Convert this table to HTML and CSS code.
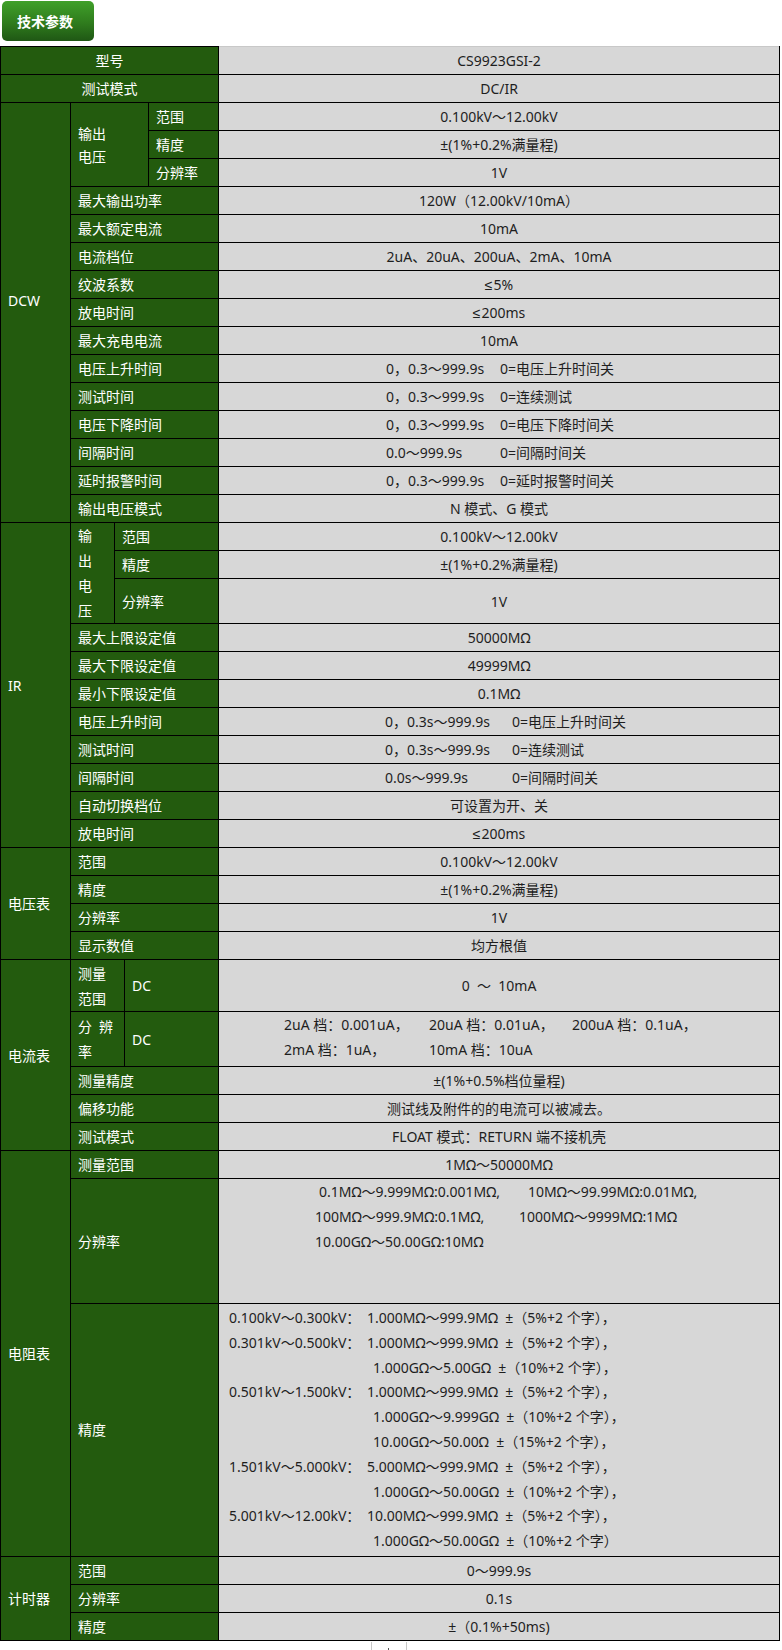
FILE: index.html
```html
<!DOCTYPE html>
<html lang="zh-CN">
<head>
<meta charset="utf-8">
<title>技术参数</title>
<link rel="stylesheet" href="styles.css">
</head>
<body>
<div class="head"><div class="btn">技术参数</div></div>
<table class="spec">
<colgroup>
<col class="w70"><col class="w44"><col class="w10"><col class="w24"><col class="w70"><col class="wv">
</colgroup>
<tbody>
<tr><td colspan="5" class="lab c">型号</td><td class="val top">CS9923GSI-2</td></tr>
<tr><td colspan="5" class="lab c">测试模式</td><td class="val">DC/IR</td></tr>

<tr><td rowspan="15" class="lab dcw">DCW</td><td rowspan="3" colspan="3" class="lab two">输出<br>电压</td><td class="lab">范围</td><td class="val">0.100kV～12.00kV</td></tr>
<tr><td class="lab">精度</td><td class="val">±(1%+0.2%满量程)</td></tr>
<tr><td class="lab">分辨率</td><td class="val">1V</td></tr>
<tr><td colspan="4" class="lab">最大输出功率</td><td class="val">120W（12.00kV/10mA）</td></tr>
<tr><td colspan="4" class="lab">最大额定电流</td><td class="val">10mA</td></tr>
<tr><td colspan="4" class="lab">电流档位</td><td class="val">2uA、20uA、200uA、2mA、10mA</td></tr>
<tr><td colspan="4" class="lab">纹波系数</td><td class="val"><span class="le">≤</span>5%</td></tr>
<tr><td colspan="4" class="lab">放电时间</td><td class="val"><span class="le">≤</span>200ms</td></tr>
<tr><td colspan="4" class="lab">最大充电电流</td><td class="val">10mA</td></tr>
<tr><td colspan="4" class="lab">电压上升时间</td><td class="val lv"><span class="p1">0，0.3～999.9s</span>0=电压上升时间关</td></tr>
<tr><td colspan="4" class="lab">测试时间</td><td class="val lv"><span class="p1">0，0.3～999.9s</span>0=连续测试</td></tr>
<tr><td colspan="4" class="lab">电压下降时间</td><td class="val lv"><span class="p1">0，0.3～999.9s</span>0=电压下降时间关</td></tr>
<tr><td colspan="4" class="lab">间隔时间</td><td class="val lv"><span class="p1">0.0～999.9s</span>0=间隔时间关</td></tr>
<tr><td colspan="4" class="lab">延时报警时间</td><td class="val lv"><span class="p1">0，0.3～999.9s</span>0=延时报警时间关</td></tr>
<tr><td colspan="4" class="lab">输出电压模式</td><td class="val">N 模式、G 模式</td></tr>

<tr><td rowspan="11" class="lab">IR</td><td rowspan="3" class="lab vert">输<br>出<br>电<br>压</td><td colspan="3" class="lab">范围</td><td class="val">0.100kV～12.00kV</td></tr>
<tr><td colspan="3" class="lab">精度</td><td class="val">±(1%+0.2%满量程)</td></tr>
<tr class="h45"><td colspan="3" class="lab">分辨率</td><td class="val">1V</td></tr>
<tr><td colspan="4" class="lab">最大上限设定值</td><td class="val">50000MΩ</td></tr>
<tr><td colspan="4" class="lab">最大下限设定值</td><td class="val">49999MΩ</td></tr>
<tr><td colspan="4" class="lab">最小下限设定值</td><td class="val">0.1MΩ</td></tr>
<tr><td colspan="4" class="lab">电压上升时间</td><td class="val lv ir"><span class="p1">0，0.3s～999.9s</span>0=电压上升时间关</td></tr>
<tr><td colspan="4" class="lab">测试时间</td><td class="val lv ir"><span class="p1">0，0.3s～999.9s</span>0=连续测试</td></tr>
<tr><td colspan="4" class="lab">间隔时间</td><td class="val lv ir"><span class="p1">0.0s～999.9s</span>0=间隔时间关</td></tr>
<tr><td colspan="4" class="lab">自动切换档位</td><td class="val">可设置为开、关</td></tr>
<tr><td colspan="4" class="lab">放电时间</td><td class="val"><span class="le">≤</span>200ms</td></tr>

<tr><td rowspan="4" class="lab">电压表</td><td colspan="4" class="lab">范围</td><td class="val">0.100kV～12.00kV</td></tr>
<tr><td colspan="4" class="lab">精度</td><td class="val">±(1%+0.2%满量程)</td></tr>
<tr><td colspan="4" class="lab">分辨率</td><td class="val">1V</td></tr>
<tr><td colspan="4" class="lab">显示数值</td><td class="val">均方根值</td></tr>

<tr class="h50"><td rowspan="5" class="lab">电流表</td><td colspan="2" class="lab tight">测量<br>范围</td><td colspan="2" class="lab">DC</td><td class="val pre">0  ～  10mA</td></tr>
<tr class="h53"><td colspan="2" class="lab tight">分&ensp;辨<br>率</td><td colspan="2" class="lab">DC</td><td class="val cur"><div><span class="q1">2uA 档：0.001uA，</span><span class="q2">20uA 档：0.01uA，</span>200uA 档：0.1uA，</div><div><span class="q1">2mA 档：1uA，</span>10mA 档：10uA</div></td></tr>
<tr><td colspan="4" class="lab">测量精度</td><td class="val">±(1%+0.5%档位量程)</td></tr>
<tr><td colspan="4" class="lab">偏移功能</td><td class="val">测试线及附件的的电流可以被减去。</td></tr>
<tr><td colspan="4" class="lab">测试模式</td><td class="val">FLOAT 模式：RETURN 端不接机壳</td></tr>

<tr><td rowspan="3" class="lab">电阻表</td><td colspan="4" class="lab">测量范围</td><td class="val">1MΩ～50000MΩ</td></tr>
<tr class="h125"><td colspan="4" class="lab">分辨率</td><td class="val res"><div class="r1"><span class="s1">0.1MΩ～9.999MΩ:0.001MΩ,</span>10MΩ～99.99MΩ:0.01MΩ,</div><div><span class="s2">100MΩ～999.9MΩ:0.1MΩ,</span>1000MΩ～9999MΩ:1MΩ</div><div>10.00GΩ～50.00GΩ:10MΩ</div></td></tr>
<tr class="h256"><td colspan="4" class="lab">精度</td><td class="val acc">
<div><span class="k">0.100kV～0.300kV：</span>1.000MΩ～999.9MΩ&nbsp; ±（5%+2 个字），</div>
<div><span class="k">0.301kV～0.500kV：</span>1.000MΩ～999.9MΩ&nbsp; ±（5%+2 个字），</div>
<div class="ind">1.000GΩ～5.00GΩ&nbsp; ±（10%+2 个字），</div>
<div><span class="k">0.501kV～1.500kV：</span>1.000MΩ～999.9MΩ&nbsp; ±（5%+2 个字），</div>
<div class="ind">1.000GΩ～9.999GΩ&nbsp; ±（10%+2 个字），</div>
<div class="ind">10.00GΩ～50.00Ω&nbsp; ±（15%+2 个字），</div>
<div><span class="k">1.501kV～5.000kV：</span>5.000MΩ～999.9MΩ&nbsp; ±（5%+2 个字），</div>
<div class="ind">1.000GΩ～50.00GΩ&nbsp; ±（10%+2 个字），</div>
<div><span class="k">5.001kV～12.00kV：</span>10.00MΩ～999.9MΩ&nbsp; ±（5%+2 个字），</div>
<div class="ind">1.000GΩ～50.00GΩ&nbsp; ±（10%+2 个字）</div>
</td></tr>

<tr><td rowspan="3" class="lab">计时器</td><td colspan="4" class="lab">范围</td><td class="val">0～999.9s</td></tr>
<tr><td colspan="4" class="lab">分辨率</td><td class="val">0.1s</td></tr>
<tr><td colspan="4" class="lab">精度</td><td class="val">±（0.1%+50ms)</td></tr>
</tbody>
</table>
<div class="foot"><span class="tick"></span></div>
</body>
</html>
```

FILE: styles.css
```css
html, body {
  margin: 0;
  padding: 0;
  background: #fff;
}
body {
  font-family: "Noto Sans", "Noto Sans CJK SC", sans-serif;
  font-size: 14px;
  color: #222;
}
.head {
  height: 46px;
  padding: 1px 0 0 2px;
  box-sizing: border-box;
}
.btn {
  width: 92px;
  height: 40px;
  box-sizing: border-box;
  padding-left: 15px;
  border-radius: 5px;
  background: linear-gradient(#40a02a, #2f7c1d 55%, #1f5714);
  color: #fff;
  font-family: "Noto Sans CJK SC", sans-serif;
  font-weight: bold;
  font-size: 14px;
  line-height: 40px;
}
.spec {
  border-collapse: collapse;
  table-layout: fixed;
  width: 779px;
  border: none;
}
.w70 { width: 70px; }
.w44 { width: 44px; }
.w10 { width: 10px; }
.w24 { width: 24px; }
.wv { width: 561px; }
.spec td {
  border: 1px solid #000;
  padding: 1px 7px;
  line-height: 25px;
  font-size: 14px;
  vertical-align: middle;
  white-space: nowrap;
}
.spec td.lab {
  background: #235b0e;
  color: #fff;
  text-align: left;
}
.spec td.c { text-align: center; }
.spec td.val {
  background: #d7d7d7;
  color: #1e1e1e;
  text-align: center;
}
.le {
  font-family: "Liberation Sans", sans-serif;
  line-height: 1;
  margin-right: 1px;
}
.spec td.top { border-top-color: #c8c8c8; }
.spec td.dcw { padding-bottom: 26px; }
.spec td.two { line-height: 23px; }
.spec td.vert { padding-top: 0; padding-bottom: 0; line-height: 25px; }
.spec td.tight { padding-top: 0; padding-bottom: 0; }
.spec td.lv {
  text-align: left;
  padding-left: 167px;
}
.lv .p1 {
  display: inline-block;
  width: 114px;
}
.spec td.ir { padding-left: 166px; }
.ir .p1 { width: 127px; }
.spec td.pre { white-space: pre; }
.spec td.cur {
  text-align: left;
  padding-left: 65px;
  padding-top: 0;
  padding-bottom: 4px;
}
.q1 { display: inline-block; width: 145px; }
.q2 { display: inline-block; width: 143px; }
tr.h45 td { height: 42px; }
tr.h50 td { height: 49px; }
tr.h53 td { height: 50px; }
tr.h125 td { height: 122px; }
tr.h256 td { height: 240px; }
.spec td.res {
  text-align: left;
  vertical-align: top;
  padding: 0 7px 0 96px;
}
.res .r1 { padding-left: 4px; }
.s1 { display: inline-block; width: 209px; }
.s2 { display: inline-block; width: 204px; }
.spec td.acc {
  text-align: left;
  padding: 2px 7px 2px 10px;
}
.acc div {
  height: 24.8px;
  line-height: 24.8px;
}
.acc .k { display: inline-block; width: 138px; }
.acc .ind { padding-left: 144px; }
.foot {
  margin: 1px 0 0 371px;
  width: 34px;
  height: 8px;
  border-left: 1px solid #c8c8c8;
  border-right: 1px solid #c8c8c8;
  position: relative;
}
.tick {
  position: absolute;
  left: 16px;
  bottom: 0;
  width: 1px;
  height: 2px;
  background: #555;
}
```
